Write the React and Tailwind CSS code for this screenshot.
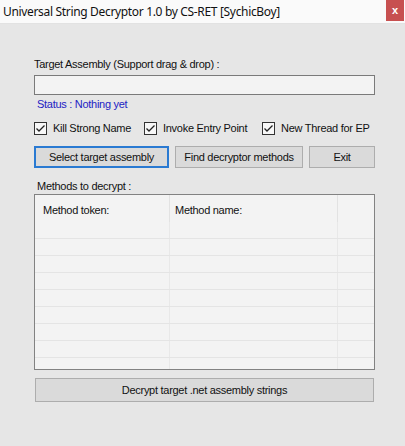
import React from 'react';

const ui = { fontFamily: '"Liberation Sans", Arial, sans-serif' };
const title = { fontFamily: '"Noto Sans", "Open Sans", sans-serif' };

function Check({ label, className }) {
  return (
    <div className={`flex items-center ${className}`}>
      <svg width="13" height="13" viewBox="0 0 13 13" className="shrink-0">
        <rect x="0.5" y="0.5" width="12" height="12" fill="#f7f7f7" stroke="#333" />
        <path d="M2.5 6.5 L5 9 L10.5 3.5" fill="none" stroke="#222" strokeWidth="1.3" />
      </svg>
      <span className="ml-[6px] leading-[13px] whitespace-nowrap">{label}</span>
    </div>
  );
}

function Btn({ children, className, focused }) {
  return (
    <div
      className={`flex items-center justify-center h-[22px] bg-[#dadada] whitespace-nowrap ${
        focused ? 'border-2 border-[#2a7ad2]' : 'border border-[#adadad]'
      } ${className}`}
    >
      {children}
    </div>
  );
}

export default function App() {
  const rows = [0, 1, 2, 3, 4, 5, 6, 7];
  return (
    <div className="w-[405px] h-[446px] bg-[#e6e6e6] flex flex-col text-[11px] text-[#111] tracking-[-0.28px]" style={ui}>
      {/* title bar */}
      <div className="h-[24px] bg-[#fafafa] flex items-start justify-between border-b border-[#e2e2e2]">
        <span className="pl-[3px] text-[12px] leading-[24px] tracking-[-0.33px] text-[#111]" style={title}>
          Universal String Decryptor 1.0 by CS-RET [SychicBoy]
        </span>
        <div className="w-[18px] h-[21px] mr-[1px] bg-[#c75050] flex items-center justify-center text-white text-[11px] font-bold leading-none">
          x
        </div>
      </div>

      <div className="pl-[34px] flex flex-col">
        <div className="mt-[34px] h-[13px] leading-[13px]">Target Assembly (Support drag &amp; drop) :</div>
        <div className="mt-[4px] w-[341px] h-[20px] border border-[#7a7a7a] bg-[#f3f3f3]" />
        <div className="mt-[3px] pl-[3px] h-[13px] leading-[13px] text-[#2222c4]">Status : Nothing yet</div>

        <div className="mt-[11px] flex h-[13px]">
          <Check label="Kill Strong Name" className="w-[110px]" />
          <Check label="Invoke Entry Point" className="w-[118px]" />
          <Check label="New Thread for EP" className="" />
        </div>

        <div className="mt-[11px] flex gap-[6px] w-[341px]">
          <Btn focused className="w-[135px]">Select target assembly</Btn>
          <Btn className="w-[128px]">Find decryptor methods</Btn>
          <Btn className="w-[66px]">Exit</Btn>
        </div>

        <div className="mt-[12px] pl-[3px] h-[13px] leading-[13px]">Methods to decrypt :</div>

        <div className="mt-[1px] w-[341px] h-[176px] border border-[#828282] bg-[#f3f3f3] flex flex-col overflow-hidden">
          <div className="flex h-[27px] shrink-0">
            <div className="w-[135px] border-r border-[#e2e2e2] pl-[8px] pt-[9px] leading-[13px]">Method token:</div>
            <div className="w-[168px] border-r border-[#e2e2e2] pl-[5px] pt-[9px] leading-[13px]">Method name:</div>
            <div className="flex-1" />
          </div>
          {rows.map((r) => (
            <div key={r} className="flex h-[17px] shrink-0 border-b border-[#e4e4e4]">
              <div className="w-[135px] border-r border-[#e8e8e8]" />
              <div className="w-[168px] border-r border-[#e8e8e8]" />
              <div className="flex-1" />
            </div>
          ))}
          <div className="flex flex-1">
            <div className="w-[135px] border-r border-[#e8e8e8]" />
            <div className="w-[168px] border-r border-[#e8e8e8]" />
            <div className="flex-1" />
          </div>
        </div>

        <Btn className="mt-[8px] ml-[1px] w-[339px] h-[24px]">Decrypt target .net assembly strings</Btn>
      </div>
    </div>
  );
}
